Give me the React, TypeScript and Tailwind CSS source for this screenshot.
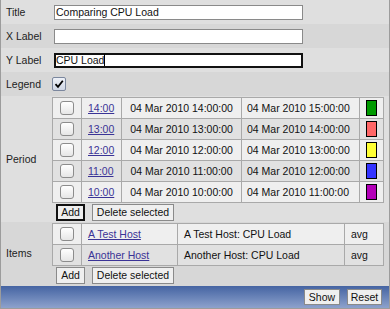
import React from "react";

const periods = [
  { t: "14:00", s: "04 Mar 2010 14:00:00", e: "04 Mar 2010 15:00:00", c: "bg-[#009a00]", bg: "bg-[#efefef]" },
  { t: "13:00", s: "04 Mar 2010 13:00:00", e: "04 Mar 2010 14:00:00", c: "bg-[#ff6666]", bg: "bg-[#e1e1e1]" },
  { t: "12:00", s: "04 Mar 2010 12:00:00", e: "04 Mar 2010 13:00:00", c: "bg-[#ffff33]", bg: "bg-[#efefef]" },
  { t: "11:00", s: "04 Mar 2010 11:00:00", e: "04 Mar 2010 12:00:00", c: "bg-[#3333ff]", bg: "bg-[#e1e1e1]" },
  { t: "10:00", s: "04 Mar 2010 10:00:00", e: "04 Mar 2010 11:00:00", c: "bg-[#b300b8]", bg: "bg-[#efefef]" },
];

const items = [
  { h: "A Test Host", d: "A Test Host: CPU Load", f: "avg", bg: "bg-[#efefef]" },
  { h: "Another Host", d: "Another Host: CPU Load", f: "avg", bg: "bg-[#e1e1e1]" },
];

function Box() {
  return (
    <div className="w-[14px] h-[14px] rounded-[3px] border border-[#8c8c8c] bg-gradient-to-b from-[#ffffff] to-[#e6e6e6]" />
  );
}

function Btn({ children, w, focus }: { children: React.ReactNode; w: string; focus?: boolean }) {
  return (
    <div
      className={`${w} h-[17px] flex items-center justify-center bg-[#efefef] text-[#111] ${
        focus ? "border-2 border-[#111]" : "border border-[#8a8a8a]"
      }`}
    >
      {children}
    </div>
  );
}

function Label({ children }: { children: React.ReactNode }) {
  return <div className="w-[51px] shrink-0 pl-[5px] text-[#222]">{children}</div>;
}

export default function App() {
  return (
    <div className="w-[390px] h-[309px] flex flex-col border-x border-b border-[#9c9c9c] font-['Liberation_Sans',Arial,sans-serif] text-[10.5px] text-[#111] leading-none">
      <div className="h-[24px] bg-[#dfdfdf] flex items-center">
        <Label>Title</Label>
        <div className="ml-[2px] w-[249px] h-[15px] border border-[#8a8a8a] bg-white pl-px flex items-center">
          Comparing CPU Load
        </div>
      </div>
      <div className="h-[24px] bg-[#d7d7d7] flex items-center">
        <Label>X Label</Label>
        <div className="ml-[2px] w-[249px] h-[15px] border border-[#8a8a8a] bg-white" />
      </div>
      <div className="h-[24px] bg-[#dfdfdf] flex items-center">
        <Label>Y Label</Label>
        <div className="ml-[2px] w-[249px] h-[15px] border-2 border-[#111] bg-white flex items-center">
          CPU Load
          <span className="inline-block w-px h-[12px] bg-black" />
        </div>
      </div>
      <div className="h-[24px] bg-[#d7d7d7] flex items-center">
        <Label>Legend</Label>
        <div className="w-[14px] h-[14px] rounded-[2px] border border-[#7b879e] bg-gradient-to-b from-[#eef1f7] to-[#cfd6e4] flex items-center justify-center">
          <svg width="10" height="10" viewBox="0 0 10 10">
            <path d="M1.5 5.2 L4 7.8 L8.8 1.8" fill="none" stroke="#000" strokeWidth="1.8" />
          </svg>
        </div>
      </div>

      <div className="bg-[#dfdfdf] flex items-center pt-px pb-px">
        <Label>Period</Label>
        <div className="flex flex-col gap-px">
          <div className="grid grid-cols-[28px_39px_119px_117px_23px] gap-px bg-[#a9a9a9] border border-[#a9a9a9] w-[332px]">
            {periods.map((p) => (
              <React.Fragment key={p.t}>
                <div className={`${p.bg} h-[20px] flex items-center justify-center`}>
                  <Box />
                </div>
                <div className={`${p.bg} h-[20px] flex items-center pl-[6px]`}>
                  <span className="text-[#3a3396] underline">{p.t}</span>
                </div>
                <div className={`${p.bg} h-[20px] flex items-center justify-center`}>{p.s}</div>
                <div className={`${p.bg} h-[20px] flex items-center pl-[5px]`}>{p.e}</div>
                <div className={`${p.bg} h-[20px] flex items-center justify-center`}>
                  <div className={`w-[11px] h-[16px] border border-black ${p.c}`} />
                </div>
              </React.Fragment>
            ))}
          </div>
          <div className="flex">
            <div className="ml-[4px]">
              <Btn w="w-[29px]" focus>Add</Btn>
            </div>
            <div className="ml-[7px]">
              <Btn w="w-[82px]">Delete selected</Btn>
            </div>
          </div>
        </div>
      </div>

      <div className="bg-[#d7d7d7] flex items-center pt-px pb-[2px]">
        <Label>Items</Label>
        <div className="flex flex-col gap-px">
          <div className="grid grid-cols-[28px_95px_166px_38px] gap-px bg-[#a9a9a9] border border-[#a9a9a9] w-[332px]">
            {items.map((it) => (
              <React.Fragment key={it.h}>
                <div className={`${it.bg} h-[20px] flex items-center justify-center`}>
                  <Box />
                </div>
                <div className={`${it.bg} h-[20px] flex items-center pl-[6px]`}>
                  <span className="text-[#3a3396] underline">{it.h}</span>
                </div>
                <div className={`${it.bg} h-[20px] flex items-center pl-[6px]`}>{it.d}</div>
                <div className={`${it.bg} h-[20px] flex items-center pl-[6px]`}>{it.f}</div>
              </React.Fragment>
            ))}
          </div>
          <div className="flex">
            <div className="ml-[4px]">
              <Btn w="w-[29px]">Add</Btn>
            </div>
            <div className="ml-[7px]">
              <Btn w="w-[82px]">Delete selected</Btn>
            </div>
          </div>
        </div>
      </div>

      <div className="flex-1 flex items-center justify-end gap-[7px] pr-[7px] bg-gradient-to-b from-[#4564a2] to-[#8ea2cc]">
        <div className="w-[36px] h-[16px] flex items-center justify-center border border-[#8a8a8a] bg-[#efefef]">Show</div>
        <div className="w-[35px] h-[16px] flex items-center justify-center border border-[#8a8a8a] bg-[#efefef]">Reset</div>
      </div>
    </div>
  );
}
